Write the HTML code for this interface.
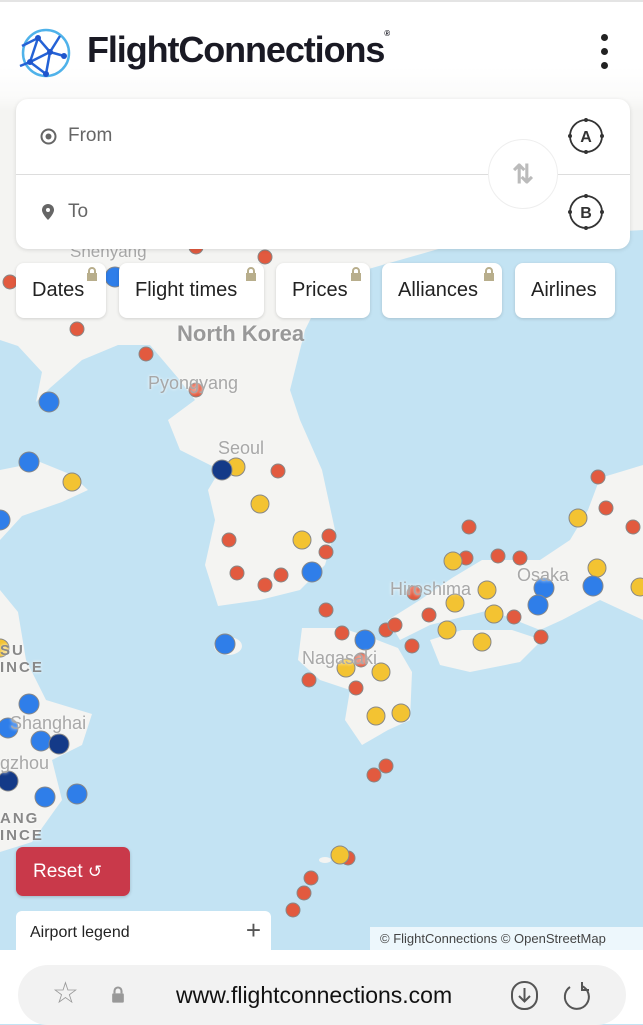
<!DOCTYPE html>
<html><head><meta charset="utf-8"><style>
*{margin:0;padding:0;box-sizing:border-box}
body{width:643px;height:1024px;overflow:hidden;position:relative;background:#c3e3f3;font-family:"Liberation Sans",sans-serif}
.map{position:absolute;left:0;top:0}
.hdr{position:absolute;left:0;top:0;width:643px;height:110px;background:linear-gradient(#fff 0,#fff 65px,rgba(255,255,255,.6) 95px,rgba(255,255,255,0) 110px);border-top:2px solid #e4e4e4}
.card{position:absolute;left:16px;top:99px;width:614px;height:150px;background:#fff;border-radius:12px;box-shadow:0 1px 4px rgba(0,0,0,.12)}
.chip{position:absolute;top:263px;height:55px;background:#fff;border-radius:8px;box-shadow:0 1px 3px rgba(0,0,0,.15);font-size:20px;color:#222;line-height:55px;padding-left:16px}
.lock{position:absolute;top:4px;width:12px;height:14px}
.lbl{position:absolute;color:#a8a8a8;font-size:18px;text-shadow:0 0 3px #fff}
.ab{position:absolute;left:550px;width:40px;height:40px}
</style></head><body>
<svg class="map" width="643" height="1024">
<g fill="#f4f4f2">
<polygon points="0,60 643,60 643,230 470,240 330,280 305,330 290,390 300,420 322,470 335,530 325,565 300,590 260,600 218,606 205,565 215,520 208,490 220,470 180,450 168,420 195,400 178,378 150,345 118,345 82,360 50,388 36,402 42,372 18,346 0,340"/>
<polygon points="0,470 40,462 72,475 88,490 62,502 22,516 0,540"/>
<polygon points="0,590 18,612 26,660 46,700 92,714 82,745 52,760 62,800 32,842 0,852"/>
<ellipse cx="228" cy="646" rx="14" ry="9"/>
<polygon points="302,628 342,628 372,638 398,648 412,672 410,720 388,730 362,745 345,720 350,690 320,680 298,660"/>
<polygon points="388,620 420,600 452,578 482,560 540,560 570,540 588,510 600,478 643,465 643,620 600,600 562,620 540,630 490,610 430,625 400,640"/>
<polygon points="430,640 462,630 512,630 542,640 520,662 470,672 440,665"/>
<ellipse cx="325" cy="860" rx="6" ry="3"/>
</g>
<g stroke="#888" stroke-width="1">
<g fill="#e25a3f"><circle cx="10" cy="282" r="7"/><circle cx="196" cy="247" r="7"/><circle cx="265" cy="257" r="7"/><circle cx="77" cy="329" r="7"/><circle cx="146" cy="354" r="7"/><circle cx="196" cy="390" r="7"/><circle cx="278" cy="471" r="7"/><circle cx="229" cy="540" r="7"/><circle cx="237" cy="573" r="7"/><circle cx="265" cy="585" r="7"/><circle cx="281" cy="575" r="7"/><circle cx="329" cy="536" r="7"/><circle cx="326" cy="552" r="7"/><circle cx="326" cy="610" r="7"/><circle cx="342" cy="633" r="7"/><circle cx="361" cy="660" r="7"/><circle cx="356" cy="688" r="7"/><circle cx="309" cy="680" r="7"/><circle cx="386" cy="630" r="7"/><circle cx="395" cy="625" r="7"/><circle cx="412" cy="646" r="7"/><circle cx="414" cy="593" r="7"/><circle cx="466" cy="558" r="7"/><circle cx="498" cy="556" r="7"/><circle cx="520" cy="558" r="7"/><circle cx="469" cy="527" r="7"/><circle cx="598" cy="477" r="7"/><circle cx="606" cy="508" r="7"/><circle cx="633" cy="527" r="7"/><circle cx="429" cy="615" r="7"/><circle cx="514" cy="617" r="7"/><circle cx="541" cy="637" r="7"/><circle cx="374" cy="775" r="7"/><circle cx="386" cy="766" r="7"/><circle cx="311" cy="878" r="7"/><circle cx="304" cy="893" r="7"/><circle cx="293" cy="910" r="7"/><circle cx="348" cy="858" r="7"/></g>
<g fill="#f3c332"><circle cx="72" cy="482" r="9"/><circle cx="236" cy="467" r="9"/><circle cx="260" cy="504" r="9"/><circle cx="302" cy="540" r="9"/><circle cx="453" cy="561" r="9"/><circle cx="487" cy="590" r="9"/><circle cx="455" cy="603" r="9"/><circle cx="494" cy="614" r="9"/><circle cx="447" cy="630" r="9"/><circle cx="482" cy="642" r="9"/><circle cx="578" cy="518" r="9"/><circle cx="597" cy="568" r="9"/><circle cx="640" cy="587" r="9"/><circle cx="346" cy="668" r="9"/><circle cx="381" cy="672" r="9"/><circle cx="376" cy="716" r="9"/><circle cx="401" cy="713" r="9"/><circle cx="340" cy="855" r="9"/><circle cx="0" cy="648" r="9"/></g>
<g fill="#2f7ee9"><circle cx="49" cy="402" r="10"/><circle cx="29" cy="462" r="10"/><circle cx="0" cy="520" r="10"/><circle cx="312" cy="572" r="10"/><circle cx="225" cy="644" r="10"/><circle cx="365" cy="640" r="10"/><circle cx="544" cy="588" r="10"/><circle cx="538" cy="605" r="10"/><circle cx="593" cy="586" r="10"/><circle cx="29" cy="704" r="10"/><circle cx="8" cy="728" r="10"/><circle cx="41" cy="741" r="10"/><circle cx="45" cy="797" r="10"/><circle cx="77" cy="794" r="10"/><circle cx="115" cy="277" r="10"/></g>
<g fill="#143a88"><circle cx="222" cy="470" r="10"/><circle cx="59" cy="744" r="10"/><circle cx="8" cy="781" r="10"/></g>
</g>
</svg>
<div class="lbl" style="left:177px;top:321px;font-size:22px;font-weight:bold;color:#999">North Korea</div>
<div class="lbl" style="left:148px;top:373px">Pyongyang</div>
<div class="lbl" style="left:218px;top:438px">Seoul</div>
<div class="lbl" style="left:390px;top:579px">Hiroshima</div>
<div class="lbl" style="left:517px;top:565px">Osaka</div>
<div class="lbl" style="left:302px;top:648px">Nagasaki</div>
<div class="lbl" style="left:10px;top:713px">Shanghai</div>
<div class="lbl" style="left:0;top:753px">gzhou</div>
<div class="lbl" style="left:0;top:642px;font-weight:bold;letter-spacing:2px;font-size:15px;color:#888">SU<br>INCE</div>
<div class="lbl" style="left:0;top:810px;font-weight:bold;letter-spacing:2px;font-size:15px;color:#888">ANG<br>INCE</div>
<div class="lbl" style="left:70px;top:242px;font-size:17px">Shenyang</div>
<div class="hdr"></div>
<svg style="position:absolute;left:16px;top:26px" width="56" height="54" viewBox="0 0 56 54" fill="none" stroke="#2a86e0" stroke-width="2.5"><circle cx="30" cy="27" r="23" stroke="#4fb2ea"/><path d="M6 20 L22 12 L34 26 L48 30 M22 12 L14 36 L34 26 L30 48 M14 36 L4 40 M34 26 L44 10 M14 36 L30 48" stroke="#2462d6"/><g fill="#1f55cc" stroke="none"><circle cx="22" cy="12" r="3"/><circle cx="34" cy="26" r="3"/><circle cx="14" cy="36" r="3"/><circle cx="30" cy="48" r="3"/><circle cx="48" cy="30" r="3"/></g></svg>
<div style="position:absolute;left:87px;top:29px;font-size:36px;font-weight:bold;color:#1a1a24;letter-spacing:-1.1px">FlightConnections<span style="font-size:8px;vertical-align:top">®</span></div>
<div style="position:absolute;left:601px;top:34px;width:8px">
<div style="width:7px;height:7px;border-radius:50%;background:#222;margin-bottom:7px"></div><div style="width:7px;height:7px;border-radius:50%;background:#222;margin-bottom:7px"></div><div style="width:7px;height:7px;border-radius:50%;background:#222"></div></div>
<div class="card">
<div style="position:absolute;left:0;right:0;top:75px;height:1px;background:#ddd"></div>
<svg style="position:absolute;left:24px;top:29px" width="17" height="17"><circle cx="8.5" cy="8.5" r="7" fill="none" stroke="#666" stroke-width="2"/><circle cx="8.5" cy="8.5" r="3" fill="#666"/></svg>
<div style="position:absolute;left:52px;top:26px;font-size:19px;color:#666">From</div>
<svg style="position:absolute;left:25px;top:104px" width="14" height="18"><path d="M7 1a6 6 0 0 1 6 6c0 4-6 10-6 10S1 11 1 7a6 6 0 0 1 6-6z" fill="#666"/><circle cx="7" cy="7" r="2" fill="#fff"/></svg>
<div style="position:absolute;left:52px;top:102px;font-size:19px;color:#666">To</div>
<div style="position:absolute;left:472px;top:40px;width:70px;height:70px;border-radius:50%;background:#fff;border:1px solid #eee;color:#bbb;font-size:26px;text-align:center;line-height:68px;font-weight:bold">⇅</div>
<svg class="ab" style="top:17px" viewBox="0 0 40 40"><circle cx="20" cy="20" r="16" fill="none" stroke="#333" stroke-width="1.8"/><g fill="#333"><circle cx="20" cy="4" r="2"/><circle cx="20" cy="36" r="2"/><circle cx="4" cy="20" r="2"/><circle cx="36" cy="20" r="2"/></g><text x="20" y="26" text-anchor="middle" font-family="Liberation Sans" font-weight="bold" font-size="16" fill="#333">A</text></svg>
<svg class="ab" style="top:93px" viewBox="0 0 40 40"><circle cx="20" cy="20" r="16" fill="none" stroke="#333" stroke-width="1.8"/><g fill="#333"><circle cx="20" cy="4" r="2"/><circle cx="20" cy="36" r="2"/><circle cx="4" cy="20" r="2"/><circle cx="36" cy="20" r="2"/></g><text x="20" y="26" text-anchor="middle" font-family="Liberation Sans" font-weight="bold" font-size="16" fill="#333">B</text></svg>
</div>
<div class="chip" style="left:16px;width:90px">Dates<svg class="lock" style="left:70px" viewBox="0 0 12 14"><path d="M3 6V4a3 3 0 0 1 6 0v2" stroke="#b8ae8c" stroke-width="2" fill="none"/><rect x="1" y="6" width="10" height="8" fill="#b8ae8c"/></svg></div>
<div class="chip" style="left:119px;width:145px">Flight times<svg class="lock" style="left:126px" viewBox="0 0 12 14"><path d="M3 6V4a3 3 0 0 1 6 0v2" stroke="#b8ae8c" stroke-width="2" fill="none"/><rect x="1" y="6" width="10" height="8" fill="#b8ae8c"/></svg></div>
<div class="chip" style="left:276px;width:94px">Prices<svg class="lock" style="left:74px" viewBox="0 0 12 14"><path d="M3 6V4a3 3 0 0 1 6 0v2" stroke="#b8ae8c" stroke-width="2" fill="none"/><rect x="1" y="6" width="10" height="8" fill="#b8ae8c"/></svg></div>
<div class="chip" style="left:382px;width:120px">Alliances<svg class="lock" style="left:101px" viewBox="0 0 12 14"><path d="M3 6V4a3 3 0 0 1 6 0v2" stroke="#b8ae8c" stroke-width="2" fill="none"/><rect x="1" y="6" width="10" height="8" fill="#b8ae8c"/></svg></div>
<div class="chip" style="left:515px;width:100px">Airlines</div>
<div style="position:absolute;left:16px;top:847px;width:114px;height:49px;background:#c9394a;border-radius:7px;color:#fff;font-size:19px;line-height:49px;padding-left:17px;box-shadow:0 1px 3px rgba(0,0,0,.2)">Reset <span style="font-size:17px">↺</span></div>
<div style="position:absolute;left:16px;top:911px;width:255px;height:45px;background:#fff;border-radius:6px 6px 0 0;font-size:16px;color:#222;padding:13px 0 0 14px">Airport legend<span style="position:absolute;right:10px;top:4px;font-size:26px;color:#555;font-weight:300">+</span></div>
<div style="position:absolute;left:370px;top:927px;width:273px;height:23px;background:rgba(255,255,255,.7);font-size:13px;color:#444;line-height:23px;padding-left:10px">© FlightConnections © OpenStreetMap</div>
<div style="position:absolute;left:0;top:950px;width:643px;height:74px;background:#fff"></div>
<div style="position:absolute;left:18px;top:965px;width:608px;height:60px;background:#f2f2f2;border-radius:30px"></div>
<div style="position:absolute;left:52px;top:976px;font-size:30px;color:#999">☆</div>
<svg style="position:absolute;left:111px;top:986px" width="14" height="17" viewBox="0 0 12 14"><path d="M3 6V4a3 3 0 0 1 6 0v2" stroke="#999" stroke-width="1.8" fill="none"/><rect x="1" y="6" width="10" height="8" rx="1" fill="#999"/></svg>
<div style="position:absolute;left:176px;top:982px;font-size:23px;color:#111">www.flightconnections.com</div>
<svg style="position:absolute;left:510px;top:980px" width="30" height="30"><rect x="2" y="2" width="25" height="27" rx="12" fill="none" stroke="#555" stroke-width="2"/><path d="M14.5 8v13M9 16l5.5 5.5L20 16" stroke="#555" stroke-width="2" fill="none"/></svg>
<svg style="position:absolute;left:560px;top:980px" width="32" height="32"><path d="M10 7A12 12 0 1 0 22 6" stroke="#555" stroke-width="2" fill="none"/><path d="M22 2v8h7" stroke="#555" stroke-width="2" fill="none"/></svg>
</body></html>
